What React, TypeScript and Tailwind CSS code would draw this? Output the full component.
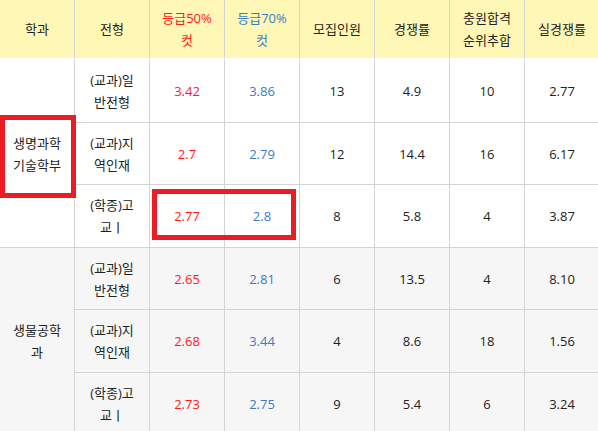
import React from 'react';

type Row = {
  type: string[];
  cut50: string;
  cut70: string;
  quota: string;
  rate: string;
  rank: string;
  real: string;
};

const groups: { name: string[]; bg: string; rows: Row[] }[] = [
  {
    name: ['생명과학', '기술학부'],
    bg: 'bg-white',
    rows: [
      { type: ['(교과)일', '반전형'], cut50: '3.42', cut70: '3.86', quota: '13', rate: '4.9', rank: '10', real: '2.77' },
      { type: ['(교과)지', '역인재'], cut50: '2.7', cut70: '2.79', quota: '12', rate: '14.4', rank: '16', real: '6.17' },
      { type: ['(학종)고', '교ㅣ'], cut50: '2.77', cut70: '2.8', quota: '8', rate: '5.8', rank: '4', real: '3.87' },
    ],
  },
  {
    name: ['생물공학', '과'],
    bg: 'bg-[#f6f6f6]',
    rows: [
      { type: ['(교과)일', '반전형'], cut50: '2.65', cut70: '2.81', quota: '6', rate: '13.5', rank: '4', real: '8.10' },
      { type: ['(교과)지', '역인재'], cut50: '2.68', cut70: '3.44', quota: '4', rate: '8.6', rank: '18', real: '1.56' },
      { type: ['(학종)고', '교ㅣ'], cut50: '2.73', cut70: '2.75', quota: '9', rate: '5.4', rank: '6', real: '3.24' },
    ],
  },
];

const rowHeights = ['h-[63px]', 'h-[62px]', 'h-[63px]', 'h-[62px]', 'h-[63px]', 'h-[62px]'];

const th = 'border-r border-r-[#d4d4d4] border-b-2 border-b-white font-normal align-middle text-center leading-[22px]';
const td = 'border-r border-b border-[#d4d4d4] align-middle text-center leading-[22px]';

const App: React.FC = () => {
  return (
    <div
      className="relative w-[598px] h-[431px] overflow-hidden bg-white text-[13px] text-[#222]"
      style={{ fontFamily: '"Open Sans", "Noto Sans CJK KR", sans-serif' }}
    >
      <table className="w-[600px] table-fixed border-separate border-spacing-0">
        <thead>
          <tr className="h-[60px] bg-[#fff7b6]">
            <th className={th}>학과</th>
            <th className={th}>전형</th>
            <th className={`${th} text-[#ff1a1a]`}>등급50%<br />컷</th>
            <th className={`${th} text-[#3b7cc4]`}>등급70%<br />컷</th>
            <th className={th}>모집인원</th>
            <th className={th}>경쟁률</th>
            <th className={th}>충원합격<br />순위추합</th>
            <th className={th}>실경쟁률</th>
          </tr>
        </thead>
        <tbody>
          {groups.map((g, gi) =>
            g.rows.map((r, ri) => (
              <tr key={`${gi}-${ri}`} className={`${rowHeights[gi * 3 + ri]} ${g.bg}`}>
                {ri === 0 && (
                  <td rowSpan={3} className={td}>
                    {g.name[0]}
                    <br />
                    {g.name[1]}
                  </td>
                )}
                <td className={td}>
                  {r.type[0]}
                  <br />
                  {r.type[1]}
                </td>
                <td className={`${td} text-[#ff1a1a]`}>{r.cut50}</td>
                <td className={`${td} text-[#3b7cc4]`}>{r.cut70}</td>
                <td className={td}>{r.quota}</td>
                <td className={td}>{r.rate}</td>
                <td className={td}>{r.rank}</td>
                <td className={td}>{r.real}</td>
              </tr>
            ))
          )}
        </tbody>
      </table>

      {/* highlight boxes */}
      <div className="absolute left-0 top-[115px] w-[76px] h-[83px] border-[5px] border-[#ec1c24]" />
      <div className="absolute left-[152px] top-[189px] w-[144px] h-[51px] border-[5px] border-[#ec1c24]" />
    </div>
  );
};

export default App;
